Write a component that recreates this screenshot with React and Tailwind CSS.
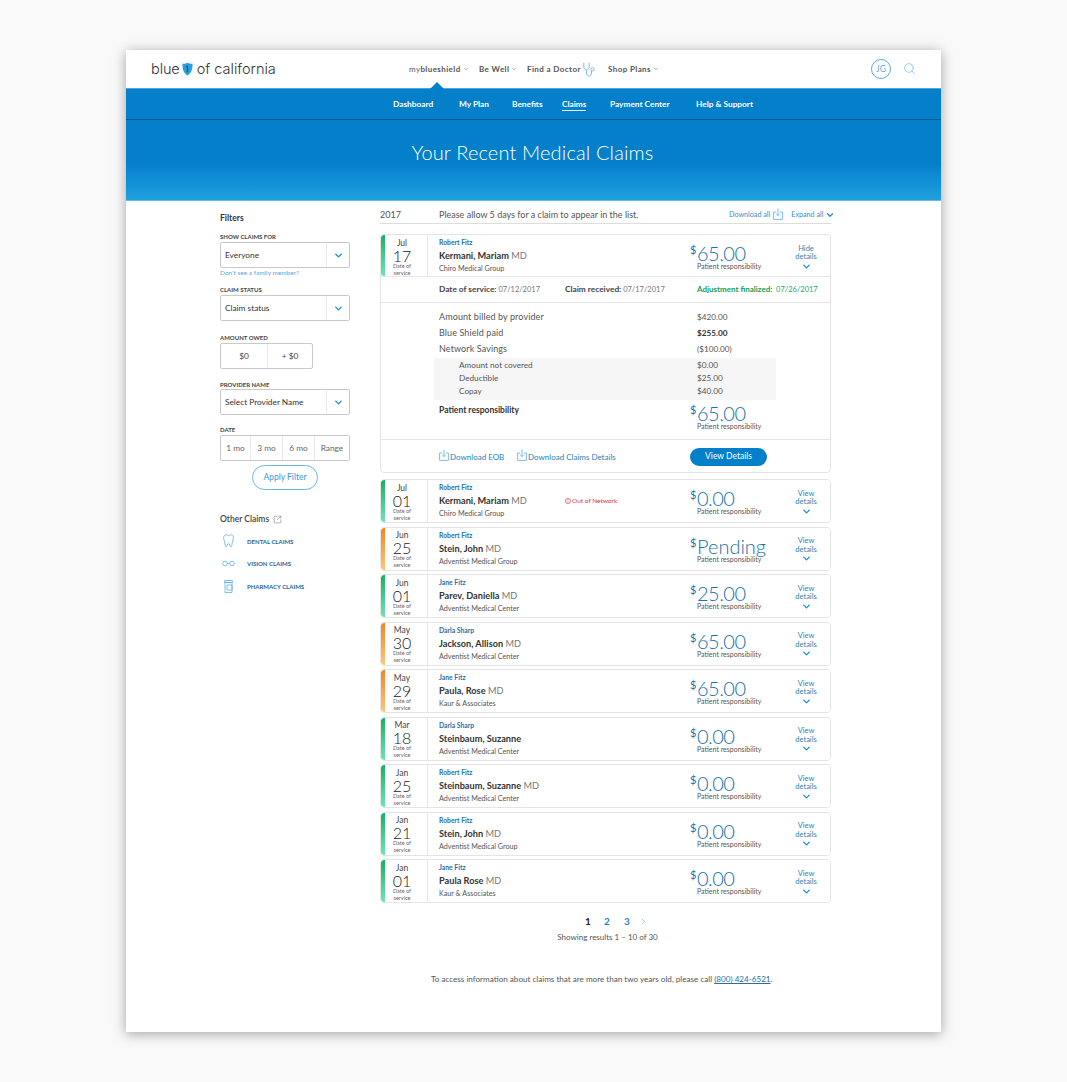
import { ChevronDown, ChevronRight, Search, SquareArrowOutUpRight } from "lucide-react";

const claims = [
  { month: "Jul", day: "01", tone: "green", patient: "Robert Fitz", name: "Kermani, Mariam", md: true, group: "Chiro Medical Group", amount: "0.00", oon: true },
  { month: "Jun", day: "25", tone: "orange", patient: "Robert Fitz", name: "Stein, John", md: true, group: "Adventist Medical Group", amount: "Pending" },
  { month: "Jun", day: "01", tone: "green", patient: "Jane Fitz", name: "Parev, Daniella", md: true, group: "Adventist Medical Center", amount: "25.00" },
  { month: "May", day: "30", tone: "orange", patient: "Darla Sharp", name: "Jackson, Allison", md: true, group: "Adventist Medical Center", amount: "65.00" },
  { month: "May", day: "29", tone: "orange", patient: "Jane Fitz", name: "Paula, Rose", md: true, group: "Kaur & Associates", amount: "65.00" },
  { month: "Mar", day: "18", tone: "green", patient: "Darla Sharp", name: "Steinbaum, Suzanne", md: false, group: "Adventist Medical Center", amount: "0.00" },
  { month: "Jan", day: "25", tone: "green", patient: "Robert Fitz", name: "Steinbaum, Suzanne", md: true, group: "Adventist Medical Center", amount: "0.00" },
  { month: "Jan", day: "21", tone: "green", patient: "Robert Fitz", name: "Stein, John", md: true, group: "Adventist Medical Group", amount: "0.00" },
  { month: "Jan", day: "01", tone: "green", patient: "Jane Fitz", name: "Paula Rose", md: true, group: "Kaur & Associates", amount: "0.00" },
];

function Shield() {
  return (
    <svg width="11" height="14" viewBox="0 0 10 13">
      <path d="M5 .8c1 .8 2.600 1 4.600.5.400 4.800-.9 8.700-4.600 11.200C1.300 10 0 6.100.4 1.300 2.400 1.800 4 1.600 5 .8z" fill="#2a9fdc" />
      <path d="M5.600 3v6.500H4.300V4.600l-1 .4V4z" fill="#0b5d94" />
    </svg>
  );
}

function Stethoscope() {
  return (
    <svg width="14" height="15" viewBox="0 0 14 15" fill="none" stroke="#6db6e6" strokeWidth=".9">
      <path d="M.8.800v4c0 1.700 1.200 3 2.700 3s2.700-1.300 2.700-3v-4" />
      <path d="M3.500 7.800v3.200c0 1.700 1.100 3 2.500 3s2.500-1.300 2.500-3V9" />
      <circle cx="9.500" cy="7.300" r="1.700" />
    </svg>
  );
}

function DownloadIcon({ className }) {
  return (
    <svg className={className} width="10" height="12" viewBox="0 0 10 12" fill="none" stroke="#6db6e6" strokeWidth=".9">
      <path d="M3 4H.6v7.400h8.800V4H7" />
      <path d="M5 .5v7M3.200 5.800 5 7.600l1.800-1.800" />
    </svg>
  );
}

function Tooth() {
  return (
    <svg width="11" height="14" viewBox="0 0 11 14" fill="none" stroke="#5fb0e4" strokeWidth=".8">
      <path d="M3 .8C1.500.8.600 2 .6 3.600c0 2 .9 3 1.100 5 .2 1.700.5 4.200 1.500 4.200s.9-3.300 2.300-3.300 1.300 3.300 2.300 3.300 1.300-2.500 1.500-4.200c.2-2 1.100-3 1.100-5C10.400 2 9.500.8 8 .8 6.800.8 6.500 1.500 5.500 1.500S4.200.8 3 .8z" />
    </svg>
  );
}

function Glasses() {
  return (
    <svg width="13" height="7" viewBox="0 0 13 7" fill="none" stroke="#5fb0e4" strokeWidth=".8">
      <circle cx="3" cy="3.500" r="2.300" />
      <circle cx="10" cy="3.500" r="2.300" />
      <path d="M5.300 3.500h2.400" />
    </svg>
  );
}

function Bottle() {
  return (
    <svg width="9" height="13" viewBox="0 0 9 13" fill="none" stroke="#5fb0e4" strokeWidth=".8">
      <path d="M.6.500h7.800v2H.6zM1 2.500h7v10H1z" />
      <path d="M3 5h5v5H3z" />
    </svg>
  );
}

function Amount({ value }) {
  return (
    <div className="flex flex-col">
      <div className="flex items-start text-[#1673ab] leading-none">
        <span className="text-[11px] font-normal w-[7px]">$</span>
        <span className={"font-light text-[20px] leading-[18px] " + (value === "Pending" ? "tracking-[0px]" : "tracking-[-0.500px]")}>{value}</span>
      </div>
      <div className="text-[7px] leading-[8px] text-[#555] ml-[7px] whitespace-nowrap">Patient responsibility</div>
    </div>
  );
}

function DetailsToggle({ label }) {
  return (
    <div className="w-[40px] flex flex-col items-center text-[7.500px] leading-[8.500px] text-[#2a86b8]">
      <span>{label}</span>
      <span>details</span>
      <ChevronDown size={11} strokeWidth={3} className="-mt-[1px] text-[#1b8fd2]" />
    </div>
  );
}

function ClaimHead({ claim, height = "h-[42px]" }) {
  const bar = claim.tone === "green" ? "from-[#0db05f] to-[#6be3b8]" : "from-[#f6801f] to-[#fbc777]";
  return (
    <div className={"flex items-stretch bg-white " + height}>
      <div className={"w-[4px] rounded-l-[3px] bg-gradient-to-b " + bar}></div>
      <div className="w-[43px] pr-[8px] border-r border-[#e6e6e6] flex flex-col items-center pt-[2.500px] text-[#444]">
        <span className="text-[8.500px] leading-[10px]">{claim.month}</span>
        <span className="text-[16px] font-light leading-[15px] text-[#222]">{claim.day}</span>
        <span className="text-[5.500px] leading-[7px] text-[#666] text-center w-[30px]">Date of service</span>
      </div>
      <div className="w-[137px] pl-[11px] pt-[3px] flex flex-col">
        <span className="text-[6.800px] leading-[8px] font-bold text-[#2a6ea5]">{claim.patient}</span>
        <span className="text-[9.200px] leading-[12px] mt-[4px] font-bold text-[#333] whitespace-nowrap">
          {claim.name}
          {claim.md && <span className="font-normal text-[#777]"> MD</span>}
        </span>
        <span className="text-[7.200px] leading-[10px] mt-[2px] text-[#555] whitespace-nowrap">{claim.group}</span>
      </div>
      <div className="w-[125px] flex items-center">
        {claim.oon && (
          <span className="flex items-center gap-[1px] text-[6.500px] text-[#d9323f] whitespace-nowrap">
            <span className="w-[6px] h-[6px] rounded-full border-[0.500px] border-[#e2727a] text-[5px] leading-[5px] text-center">!</span>
            Out of Network
          </span>
        )}
      </div>
      <div className="w-[92px] pt-[9px]">
        <Amount value={claim.amount} />
      </div>
      <div className="pt-[9.500px] flex-1 flex justify-center">
        <DetailsToggle label={claim.hide ? "Hide" : "View"} />
      </div>
    </div>
  );
}

function Select({ label }) {
  return (
    <div className="h-[26px] w-[130px] border border-[#c9c9c9] rounded-[2px] flex items-center">
      <span className="flex-1 pl-[4px] text-[8.300px] text-[#333]">{label}</span>
      <div className="w-[23px] h-full border-l border-[#eaeaea] flex items-center justify-center text-[#1b8fd2]">
        <ChevronDown size={11} strokeWidth={3} />
      </div>
    </div>
  );
}

function FieldLabel({ children, className }) {
  return <div className={"text-[6px] leading-[8px] font-bold text-[#444] uppercase " + className}>{children}</div>;
}

function Sidebar() {
  return (
    <aside className="w-[160px] shrink-0 pt-[12px]">
      <div className="text-[8.500px] leading-[10px] font-bold text-[#333]">Filters</div>
      <FieldLabel className="mt-[10px] mb-[1px]">Show claims for</FieldLabel>
      <Select label="Everyone" />
      <div className="text-[6.500px] leading-[8px] mt-[1px] text-[#5aa7e0]">Don't see a family member?</div>
      <FieldLabel className="mt-[9px] mb-[1px]">Claim status</FieldLabel>
      <Select label="Claim status" />
      <FieldLabel className="mt-[13px] mb-[1px]">Amount owed</FieldLabel>
      <div className="h-[26px] w-[93px] border border-[#c9c9c9] rounded-[2px] flex text-[8.300px] text-[#444]">
        <div className="w-[47px] border-r border-[#eaeaea] flex items-center justify-center">$0</div>
        <div className="flex-1 flex items-center justify-center">+ $0</div>
      </div>
      <FieldLabel className="mt-[12px] mb-[0px]">Provider name</FieldLabel>
      <Select label="Select Provider Name" />
      <FieldLabel className="mt-[11px] mb-[1px]">Date</FieldLabel>
      <div className="h-[26px] w-[130px] border border-[#c9c9c9] rounded-[2px] flex text-[8.300px] text-[#666]">
        <div className="w-[30px] border-r border-[#eaeaea] flex items-center justify-center">1 mo</div>
        <div className="w-[32px] border-r border-[#eaeaea] flex items-center justify-center">3 mo</div>
        <div className="w-[32px] border-r border-[#eaeaea] flex items-center justify-center">6 mo</div>
        <div className="flex-1 flex items-center justify-center">Range</div>
      </div>
      <div className="w-[130px] flex justify-center mt-[4px]">
        <button className="w-[66px] h-[25px] rounded-full border border-[#6db6e6] text-[8.500px] text-[#3a9ad9]">Apply Filter</button>
      </div>
      <div className="flex items-center gap-[4px] mt-[24px] text-[8.500px] leading-[10px] font-semibold text-[#444]">
        Other Claims
        <SquareArrowOutUpRight size={9} strokeWidth={1.300} className="text-[#666]" />
      </div>
      <div className="mt-[10px] flex flex-col gap-[8.500px]">
        {[
          [<Tooth key="t" />, "Dental claims"],
          [<Glasses key="g" />, "Vision claims"],
          [<Bottle key="b" />, "Pharmacy claims"],
        ].map(([icon, label]) => (
          <div key={label} className="flex items-center h-[14px]">
            <div className="w-[17px] flex justify-center">{icon}</div>
            <span className="ml-[10px] text-[6px] font-bold uppercase text-[#2a6496]">{label}</span>
          </div>
        ))}
      </div>
    </aside>
  );
}

function Line({ label, value, strong }) {
  return (
    <div className="flex h-[16px] items-center pl-[58px]">
      <span className="w-[258px] text-[9px] tracking-[0.100px]">{label}</span>
      <span className={"text-[8.200px] " + (strong ? "font-bold text-[#333]" : "")}>{value}</span>
    </div>
  );
}

function ExpandedClaim() {
  const first = { month: "Jul", day: "17", tone: "green", patient: "Robert Fitz", name: "Kermani, Mariam", md: true, group: "Chiro Medical Group", amount: "65.00", hide: true };
  return (
    <div className="border border-[#e4e4e4] rounded-[4px] h-[239px] flex flex-col overflow-hidden">
      <ClaimHead claim={first} height="h-[41px]" />
      <div className="h-[27px] shrink-0 border-t border-b border-[#e6e6e6] flex items-center pl-[58px] text-[7.500px] text-[#777]">
        <span className="w-[126px]"><b className="text-[8.300px] font-bold text-[#444]">Date of service:</b> 07/12/2017</span>
        <span className="w-[132px]"><b className="text-[8.300px] font-bold text-[#444]">Claim received:</b> 07/17/2017</span>
        <span className="text-[#2ba36a] whitespace-nowrap"><b className="text-[8px] font-bold text-[#1c9a5a]">Adjustment finalized:</b> &nbsp;07/26/2017</span>
      </div>
      <div className="flex-1 flex flex-col text-[#555] pt-[6px]">
        <Line label="Amount billed by provider" value="$420.00" />
        <Line label="Blue Shield paid" value="$255.00" strong />
        <Line label="Network Savings" value="($100.00)" />
        <div className="ml-[53px] w-[342px] h-[42px] mt-[0.500px] bg-[#f6f6f6] flex flex-col justify-center text-[8.200px]">
          {[["Amount not covered", "$0.00"], ["Deductible", "$25.00"], ["Copay", "$40.00"]].map(([a, b]) => (
            <div key={a} className="flex h-[13px] items-center">
              <span className="w-[263px] pl-[25px]">{a}</span>
              <span>{b}</span>
            </div>
          ))}
        </div>
        <div className="flex pl-[58px] mt-[4px]">
          <span className="w-[251px] text-[8.500px] font-bold text-[#333]">Patient responsibility</span>
          <Amount value="65.00" />
        </div>
      </div>
      <div className="h-[33px] shrink-0 border-t border-[#e6e6e6] flex items-center pl-[58px] pt-[1px]">
        <DownloadIcon className="-mt-[3px]" />
        <span className="ml-[1px] w-[67px] text-[8px] text-[#2a7fb8]">Download EOB</span>
        <DownloadIcon className="-mt-[3px]" />
        <span className="ml-[1px] w-[162px] text-[8px] text-[#2a7fb8]">Download Claims Details</span>
        <button className="w-[77px] h-[18px] rounded-full bg-[#0480cb] text-white text-[8.500px]">View Details</button>
      </div>
    </div>
  );
}

export default function App() {
  return (
    <div className="min-h-[1082px] bg-[#f9f9f9] pt-[50px] font-['Lato',sans-serif]">
      <div className="ml-[126px] w-[815px] h-[982px] bg-white shadow-[0_2px_12px_rgba(0,0,0,0.35)]">
        <header className="h-[38px] flex items-center pl-[25px] relative">
          <div className="w-[258px] flex items-center text-[14.500px] font-light text-[#333] font-['Inter',sans-serif]">
            <span className="tracking-[-0.100px]">blue</span>
            <span className="ml-[2px] mr-[4px]"><Shield /></span>
            <span>of california</span>
          </div>
          <nav className="flex items-center text-[8px] font-bold text-[#555] tracking-[0.400px] whitespace-nowrap">
            <span className="w-[70px] flex items-center gap-[2px]"><span><span className="font-normal">my</span>blueshield</span><ChevronDown size={6} /></span>
            <span className="w-[48px] flex items-center gap-[2px]">Be Well<ChevronDown size={6} /></span>
            <span className="w-[81px] flex items-center gap-[2px]">Find a Doctor<Stethoscope /></span>
            <span className="flex items-center gap-[2px]">Shop Plans<ChevronDown size={6} /></span>
          </nav>
          <div className="absolute left-[745px] top-[9px] w-[20px] h-[20px] rounded-full border border-[#5aa9dd] flex items-center justify-center text-[8.500px] text-[#5aa9dd]">JG</div>
          <Search size={13} strokeWidth={1.300} className="absolute left-[777px] top-[12px] text-[#6db6e6]" />
          <div className="absolute left-[304px] top-[31.500px] w-0 h-0 border-x-[7px] border-x-transparent border-b-[7px] border-b-[#0480cb]"></div>
        </header>
        <div className="h-[32px] bg-[#0480cb] border-t border-[#4aa6e0] border-b-[1.500px] border-b-[#045a8f] flex items-center pl-[267px] text-[8.300px] font-bold text-white whitespace-nowrap">
          <span className="w-[66px]">Dashboard</span>
          <span className="w-[53px]">My Plan</span>
          <span className="w-[50px]">Benefits</span>
          <span className="w-[48px]"><span className="border-b border-white pb-[1px]">Claims</span></span>
          <span className="w-[86px]">Payment Center</span>
          <span>Help &amp; Support</span>
        </div>
        <div className="h-[81px] pt-[18px] pr-[2px] text-center text-[20px] leading-[28px] font-light tracking-[0.150px] text-white bg-[linear-gradient(#0480cb_0,#0480cb_55%,#21a0e0_100%)] border-b border-[#62bdee]">
          Your Recent Medical Claims
        </div>
        <div className="flex pl-[94px]">
          <Sidebar />
          <main className="w-[451px]">
            <div className="h-[23px] pt-[6px] border-b border-[#ddd] flex items-center text-[9px] text-[#555]">
              <span className="w-[59px] shrink-0">2017</span>
              <span className="w-[290px] shrink-0">Please allow 5 days for a claim to appear in the list.</span>
              <span className="text-[#3a8fc7] text-[7.200px] whitespace-nowrap">Download all</span>
              <DownloadIcon className="ml-[3px] -mt-[2px] shrink-0" />
              <span className="ml-[8px] text-[#3a8fc7] text-[7.200px] whitespace-nowrap">Expand all</span>
              <ChevronDown size={10} strokeWidth={3} className="ml-[2px] text-[#1b8fd2] shrink-0" />
            </div>
            <div className="mt-[10px]">
              <ExpandedClaim />
            </div>
            <div className="mt-[6px] flex flex-col gap-[3.500px]">
              {claims.map((c, i) => (
                <div key={i} className="border border-[#e4e4e4] rounded-[4px] overflow-hidden">
                  <ClaimHead claim={c} />
                </div>
              ))}
            </div>
            <div className="flex justify-center items-center mt-[11px] pl-[22px] h-[14px] text-[10px] font-bold text-[#1b86c8]">
              <span className="text-[#222] w-[19px]">1</span>
              <span className="w-[20px]">2</span>
              <span className="w-[15px]">3</span>
              <ChevronRight size={9} strokeWidth={2} className="text-[#6db6e6]" />
            </div>
            <div className="text-center text-[8px] leading-[12px] text-[#555] mt-[3px] pl-[4px]">Showing results 1 – 10 of 30</div>
            <div className="text-[8.100px] leading-[12px] text-[#555] mt-[30px] ml-[51px] whitespace-nowrap">
              To access information about claims that are more than two years old, please call <span className="underline text-[#2a6ea5]">(800) 424-6521</span>.
            </div>
          </main>
        </div>
      </div>
    </div>
  );
}
